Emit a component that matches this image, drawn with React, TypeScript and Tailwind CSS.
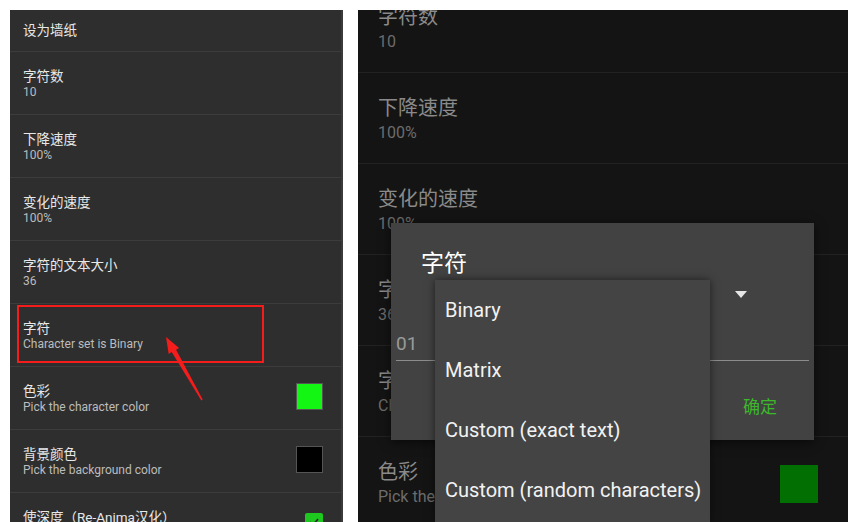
type Pref = {
  title: string;
  sub?: string;
  swatch?: string;
  check?: boolean;
};

const leftRows: Pref[] = [
  { title: '字符数', sub: '10' },
  { title: '下降速度', sub: '100%' },
  { title: '变化的速度', sub: '100%' },
  { title: '字符的文本大小', sub: '36' },
  { title: '字符', sub: 'Character set is Binary' },
  { title: '色彩', sub: 'Pick the character color', swatch: 'bg-[#13f513]' },
  { title: '背景颜色', sub: 'Pick the background color', swatch: 'bg-black' },
  { title: '使深度（Re-Anima汉化）', check: true },
];

const rightRows: Pref[] = [
  { title: '字符数', sub: '10' },
  { title: '下降速度', sub: '100%' },
  { title: '变化的速度', sub: '100%' },
  { title: '字符的文本大小', sub: '36' },
  { title: '字符', sub: 'Character set is Binary' },
  { title: '色彩', sub: 'Pick the character color', swatch: 'bg-[#026f02]' },
];

const options = ['Binary', 'Matrix', 'Custom (exact text)', 'Custom (random characters)'];

function LeftRow({ row }: { row: Pref }) {
  return (
    <div className="h-[63px] shrink-0 flex items-start justify-between border-b border-[#3c3c3c] pl-[13px] pr-[18px]">
      <div className="pt-[16px]">
        <div className="text-[13.5px] leading-[17px] text-[#e8e8e8]">{row.title}</div>
        {row.sub && <div className="text-[12px] leading-[15px] text-[#bcbcbc]">{row.sub}</div>}
      </div>
      {row.swatch && (
        <div className={`mt-[16px] w-[27px] h-[27px] border border-[#555] ${row.swatch}`} />
      )}
      {row.check && (
        <div className="mt-[20px] w-[18px] h-[18px] rounded-[2px] bg-[#1ec81e] flex items-center justify-center">
          <svg viewBox="0 0 24 24" className="w-[14px] h-[14px]" fill="none" stroke="#2d2d2d" strokeWidth="3">
            <path d="M5 12l5 5 9-10" />
          </svg>
        </div>
      )}
    </div>
  );
}

function RightRow({ row }: { row: Pref }) {
  return (
    <div className="h-[91px] shrink-0 flex items-start justify-between border-b border-[#222] pl-[20px] pr-[30px]">
      <div className="pt-[23px] whitespace-nowrap">
        <div className="text-[20px] leading-[25px] text-[#8a8a8a]">{row.title}</div>
        {row.sub && <div className="text-[16px] leading-[24px] text-[#6c6c6c]">{row.sub}</div>}
      </div>
      {row.swatch && <div className={`mt-[28px] w-[38px] h-[38px] ${row.swatch}`} />}
    </div>
  );
}

export default function App() {
  return (
    <div className="relative w-[858px] h-[522px] overflow-hidden bg-white flex gap-[15px] pt-[10px] pl-[10px] font-['Roboto','Noto_Sans_CJK_SC',sans-serif]">
      {/* left phone: settings list */}
      <div className="relative w-[333px] h-[512px] shrink-0 overflow-hidden bg-[#2e2e2e] border-r-[2px] border-[#3a3a3a] flex flex-col">
        <div className="h-[42px] shrink-0 flex items-center border-b border-[#3c3c3c] pl-[13px] text-[13.5px] text-[#e8e8e8]">
          设为墙纸
        </div>
        {leftRows.map((r, i) => (
          <LeftRow key={i} row={r} />
        ))}
        <div className="absolute left-[7px] top-[295px] w-[247px] h-[58px] border-2 border-[#f51c1c]" />
      </div>

      {/* right phone: dialog open */}
      <div className="relative w-[490px] h-[512px] shrink-0 overflow-hidden bg-[#141414]">
        <div className="flex flex-col mt-[-28px]">
          {rightRows.map((r, i) => (
            <RightRow key={i} row={r} />
          ))}
        </div>

        <div className="absolute left-[33px] top-[213px] w-[423px] h-[217px] bg-[#424242] shadow-[0_2px_10px_rgba(0,0,0,0.6)] flex flex-col">
          <div className="pt-[26px] pl-[30px] h-[56px] text-[23px] leading-[30px] text-white">字符</div>
          <div className="h-[30px] flex items-center pl-[344px]">
            <svg viewBox="0 0 12 7" className="w-[12px] h-[7px]">
              <path d="M0 0h12L6 7z" fill="#e6e6e6" />
            </svg>
          </div>
          <div className="mt-[23px] mx-[5px] pb-[4px] border-b border-[#8c8c8c] text-[19px] leading-[24px] text-[#9a9a9a]">01</div>
          <div className="mt-[35px] flex justify-end pr-[37px] text-[17px] leading-[22px] text-[#3cb82a]">确定</div>
        </div>

        <div className="absolute left-[77px] top-[270px] w-[275px] h-[242px] bg-[#444] shadow-[0_0_8px_rgba(0,0,0,0.55)] flex flex-col">
          {options.map((o) => (
            <div key={o} className="h-[60px] shrink-0 flex items-center pl-[10px] text-[20px] text-[#f2f2f2] whitespace-nowrap">
              {o}
            </div>
          ))}
        </div>
      </div>

      {/* red arrow annotation */}
      <svg className="absolute left-0 top-0 w-[858px] h-[522px] pointer-events-none" viewBox="0 0 858 522">
        <polygon
          points="166,337 179.1,347.9 176.1,349.7 202.7,399.6 201.3,400.4 171.7,352.1 168.7,353.9"
          fill="#f51c1c"
        />
      </svg>
    </div>
  );
}
